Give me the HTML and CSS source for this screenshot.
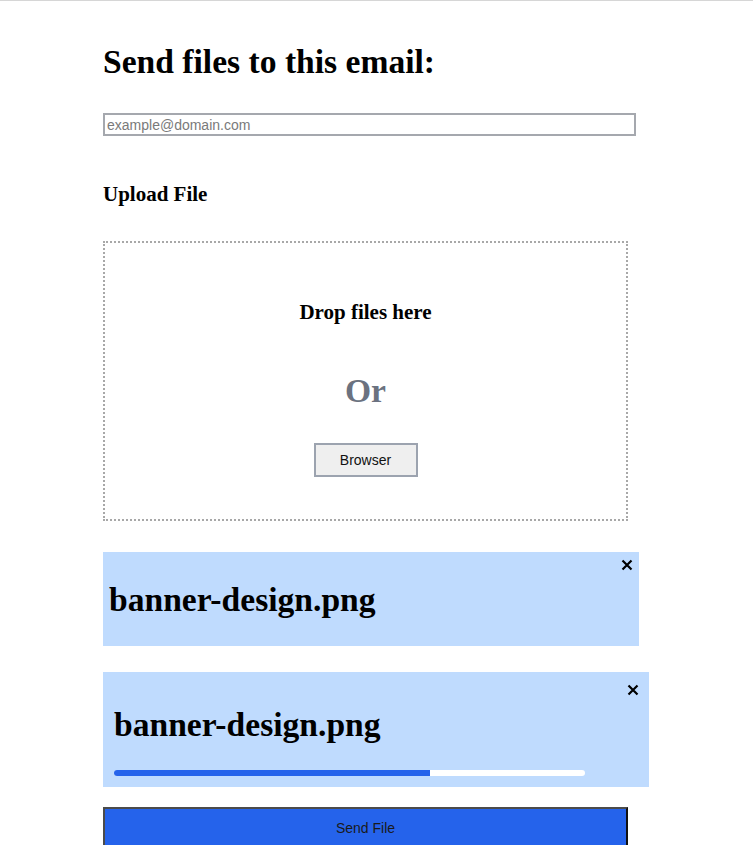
FILE: index.html
```html
<!DOCTYPE html>
<html>
<head>
<meta charset="utf-8">
<link rel="stylesheet" href="styles.css">
</head>
<body>
<main class="page">
  <h1 class="title">Send files to this email:</h1>
  <input class="email" type="email" placeholder="example@domain.com">
  <h3 class="label">Upload File</h3>
  <div class="dropzone">
    <h3 class="drop-text">Drop files here</h3>
    <h1 class="or">Or</h1>
    <button class="browse">Browser</button>
  </div>
  <div class="file file-one">
    <h1 class="file-name">banner-design.png</h1>
    <span class="close"><svg viewBox="0 0 12 12" width="12" height="12"><path d="M1.5 1.5 L10.5 10.5 M10.5 1.5 L1.5 10.5" stroke="#000" stroke-width="2.2" fill="none"/></svg></span>
  </div>
  <div class="file file-two">
    <h1 class="file-name">banner-design.png</h1>
    <div class="progress"><div class="progress-fill" style="width: 67%"></div></div>
    <span class="close"><svg viewBox="0 0 12 12" width="12" height="12"><path d="M1.5 1.5 L10.5 10.5 M10.5 1.5 L1.5 10.5" stroke="#000" stroke-width="2.2" fill="none"/></svg></span>
  </div>
  <button class="send">Send File</button>
</main>
</body>
</html>
```
FILE: styles.css
```css
html, body {
  margin: 0;
  padding: 0;
  background: #fff;
}
body {
  border-top: 1px solid #d6d6d6;
  font-family: "Liberation Serif", "Times New Roman", serif;
  color: #000;
}
.page {
  margin-left: 103px;
  width: 533px;
  display: flex;
  flex-direction: column;
  align-items: flex-start;
}
.title {
  margin: 42px 0 0;
  font-size: 33.6px;
  line-height: 37px;
  font-weight: bold;
}
.email {
  box-sizing: border-box;
  margin: 33px 0 0;
  width: 533px;
  height: 23px;
  border: 2px solid #a5a8ae;
  padding: 0 2px;
  font-family: "Liberation Sans", Arial, sans-serif;
  font-size: 14px;
  outline: none;
}
.email::placeholder {
  color: #7a7a7a;
}
.label {
  margin: 47px 0 0;
  font-size: 21px;
  line-height: 22px;
  font-weight: bold;
}
.dropzone {
  box-sizing: border-box;
  margin-top: 36px;
  width: 525px;
  height: 280px;
  border: 2px dotted #a8a8a8;
  padding-top: 58px;
  display: flex;
  flex-direction: column;
  align-items: center;
}
.drop-text {
  margin: 0;
  font-size: 21px;
  line-height: 22px;
  font-weight: bold;
}
.or {
  margin: 49px 0 0;
  font-size: 33.6px;
  line-height: 37px;
  font-weight: bold;
  color: #6b7280;
}
.browse {
  margin-top: 34px;
  width: 104px;
  height: 34px;
  box-sizing: border-box;
  background: #efefef;
  border: 2px solid #9ca3af;
  font-family: "Liberation Sans", Arial, sans-serif;
  font-size: 14px;
  color: #111;
  padding: 0;
}
.file {
  position: relative;
  box-sizing: border-box;
  background: #bfdbfe;
}
.file-one {
  margin-top: 31px;
  width: 536px;
  height: 94px;
  padding: 29px 6px 0;
}
.file-two {
  margin-top: 26px;
  width: 546px;
  height: 115px;
  padding: 34px 11px 0;
}
.file-name {
  margin: 0;
  font-size: 33.6px;
  line-height: 37px;
  font-weight: bold;
}
.close {
  position: absolute;
  width: 12px;
  height: 12px;
  display: block;
}
.close svg {
  display: block;
}
.file-one .close {
  top: 7px;
  right: 6px;
}
.file-two .close {
  top: 12px;
  right: 10px;
}
.progress {
  margin-top: 27px;
  width: 471px;
  height: 6px;
  background: #fff;
  border-radius: 3px;
  overflow: hidden;
}
.progress-fill {
  height: 100%;
  background: #2563eb;
}
.send {
  margin-top: 20px;
  box-sizing: border-box;
  width: 525px;
  height: 44px;
  background: #2563eb;
  border: 2px solid #4b4b4b;
  border-right-color: #111;
  border-bottom-color: #111;
  font-family: "Liberation Sans", Arial, sans-serif;
  font-size: 14px;
  color: #1a1a1a;
  padding: 0 0 2px;
}
```
